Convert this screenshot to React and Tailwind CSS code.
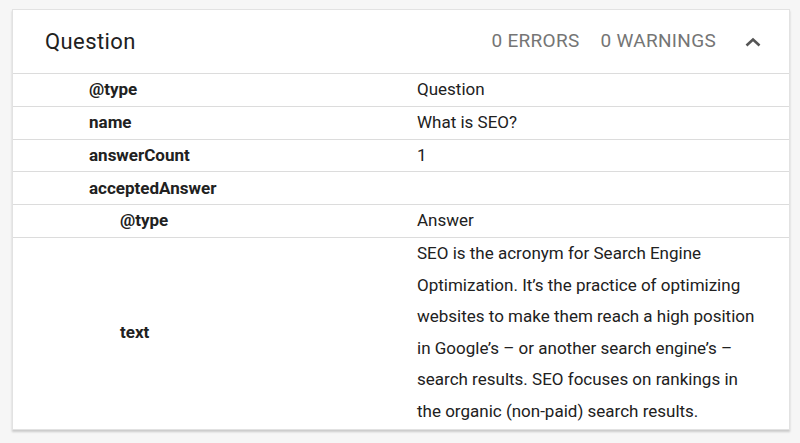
import React from "react";

const rows = [
  { k: "@type", v: "Question", indent: false },
  { k: "name", v: "What is SEO?", indent: false },
  { k: "answerCount", v: "1", indent: false },
  { k: "acceptedAnswer", v: "", indent: false },
  { k: "@type", v: "Answer", indent: true },
];

export default function App() {
  return (
    <div
      className="w-[800px] h-[443px] bg-[#f6f6f6] pt-[9px] pl-[12px] overflow-hidden"
      style={{ fontFamily: "Roboto, 'Liberation Sans', sans-serif" }}
    >
      <div className="w-[778px] bg-white border border-[#e2e2e2] shadow-[0_2px_2px_rgba(0,0,0,0.18)]">
        <div className="h-[64px] flex items-center border-b border-[#dcdcdc]">
          <div className="pl-[32px] text-[22px] tracking-[0.4px] text-[#212121] flex-1">Question</div>
          <div className="text-[19px] text-[#757575] tracking-[0.3px] flex gap-[21px]">
            <span>0 ERRORS</span>
            <span>0 WARNINGS</span>
          </div>
          <div className="w-[30px] ml-[22px] mr-[21px] flex justify-center">
            <svg width="18" height="12" viewBox="0 0 18 12">
              <path d="M2.5 9.5 L9 3.5 L15.5 9.5" fill="none" stroke="#555" strokeWidth="2.6" />
            </svg>
          </div>
        </div>
        {rows.map((r, i) => (
          <div key={i} className="flex h-[32.8px] items-center border-b border-[#dcdcdc] text-[17px] text-[#212121]">
            <div className={`w-[404px] font-bold ${r.indent ? "pl-[107px]" : "pl-[76px]"}`}>{r.k}</div>
            <div className="flex-1">{r.v}</div>
          </div>
        ))}
        <div className="flex items-center text-[17px] text-[#212121] pb-[1px]">
          <div className="w-[404px] font-bold pl-[107px]">text</div>
          <div className="w-[345px] leading-[31.6px]">
            SEO is the acronym for Search Engine Optimization. It’s the practice of optimizing websites to make them reach a high position in Google’s – or another search engine’s – search results. SEO focuses on rankings in the organic (non-paid) search results.
          </div>
        </div>
      </div>
    </div>
  );
}
